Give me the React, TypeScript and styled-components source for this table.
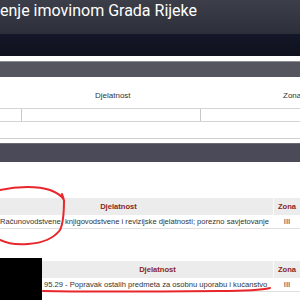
import React, { FC } from 'react';
import styled, { createGlobalStyle } from 'styled-components';

const GlobalStyle = createGlobalStyle`
  html, body {
    margin: 0;
    padding: 0;
    background: #fff;
  }
  body {
    font-family: "Liberation Sans", Arial, sans-serif;
    overflow: hidden;
  }
`;

const Page = styled.div`
  position: relative;
  width: 300px;
  height: 300px;
  overflow: hidden;
  background: #fff;
`;

const TitleBar = styled.header`
  height: 34px;
  background: linear-gradient(#3c3f49, #2c2f3a);
  color: #fff;
  font-family: Roboto, "Liberation Sans", sans-serif;
  font-size: 16px;
  line-height: 22px;
  white-space: nowrap;
  box-sizing: border-box;
`;

const NavBand = styled.nav`
  height: 22px;
  background: linear-gradient(#141728, #0f111d);
  margin-bottom: 5px;
`;

const SectionBar = styled.div<{ $tall?: boolean }>`
  height: ${({ $tall }) => ($tall ? '19px' : '16px')};
  background: ${({ $tall }) => ($tall ? '#4b4a58' : '#55555f')};
  border-top: 1px solid ${({ $tall }) => ($tall ? '#6a6a76' : '#8e8e96')};
  box-sizing: border-box;
`;

const FilterForm = styled.div`
  height: 62px;
  border-bottom: 1px solid #cfcfcf;
  box-sizing: border-box;
  margin-bottom: 4px;
  padding-top: 15px;
`;

const FilterHead = styled.div`
  display: grid;
  grid-template-columns: 201px 1fr;
  font-size: 8px;
  color: #333;
  height: 16px;
  line-height: 8px;
`;

const HeadLabel = styled.span<{ $left?: number }>`
  padding-left: ${({ $left }) => $left ?? 0}px;
`;

const InputRow = styled.div`
  display: grid;
  grid-template-columns: 22px 179px 1fr;
  height: 12px;
  border-top: 1px solid #d4d4d4;
  border-bottom: 1px solid #d4d4d4;
`;

const InputCell = styled.div`
  border-right: 1px solid #c8c8c8;
  &:last-child {
    border-right: none;
  }
`;

const Table = styled.div`
  display: grid;
  grid-template-columns: 1fr 26px;
  font-size: 7.6px;
  color: #333;
`;

const HeadCell = styled.div<{ $shift?: number }>`
  background: #ececec;
  color: #8a1f24;
  font-weight: bold;
  height: 17px;
  line-height: 17px;
  text-align: center;
  padding-right: ${({ $shift }) => $shift ?? 0}px;
  border-right: 1px solid #fafafa;
  &:nth-child(2) {
    border-right: none;
  }
`;

const BodyCell = styled.div<{ $center?: boolean; $pad?: number }>`
  height: 13px;
  line-height: 13px;
  color: #333;
  white-space: nowrap;
  border-bottom: 1px solid #e0e0e0;
  text-align: ${({ $center }) => ($center ? 'center' : 'left')};
  padding-left: ${({ $pad }) => $pad ?? 0}px;
`;

const FirstTable = styled.section`
  margin-top: 36px;
`;

const SecondBlock = styled.section`
  margin-top: 29px;
  display: flex;
`;

const Redacted = styled.div`
  width: 42px;
  height: 43px;
  background: #000;
  flex: none;
`;

const SecondTable = styled.div`
  flex: 1;
  padding-top: 3px;
`;

const Scribble = styled.svg`
  position: absolute;
  left: 0;
  top: 0;
  pointer-events: none;
`;

const Annotations: FC = () => (
  <Scribble width="300" height="300" viewBox="0 0 300 300">
    <path
      d="M0 190 C18 186 38 186 50 190 C58 193 62 196 64 200 L62 194 M64 200 C64 210 64 222 60 230 C54 238 42 243 28 244 C16 245 6 243 0 240"
      fill="none"
      stroke="#e8262b"
      strokeWidth="2"
      strokeLinecap="round"
    />
    <path
      d="M43 291 C90 292 160 291.5 220 291 C245 291 262 290 270 288"
      fill="none"
      stroke="#e8262b"
      strokeWidth="2"
      strokeLinecap="round"
    />
  </Scribble>
);

const App: FC = () => (
  <Page>
    <GlobalStyle />
    <TitleBar>enje imovinom Grada Rijeke</TitleBar>
    <NavBand />
    <SectionBar />
    <FilterForm>
      <FilterHead>
        <HeadLabel $left={95}>Djelatnost</HeadLabel>
        <HeadLabel $left={82}>Zona</HeadLabel>
      </FilterHead>
      <InputRow>
        <InputCell />
        <InputCell />
        <InputCell />
      </InputRow>
    </FilterForm>
    <SectionBar $tall />
    <FirstTable>
      <Table>
        <HeadCell $shift={36}>Djelatnost</HeadCell>
        <HeadCell>Zona</HeadCell>
        <BodyCell>Računovodstvene, knjigovodstvene i revizijske djelatnosti; porezno savjetovanje</BodyCell>
        <BodyCell $center>III</BodyCell>
      </Table>
    </FirstTable>
    <SecondBlock>
      <Redacted />
      <SecondTable>
        <Table>
          <HeadCell>Djelatnost</HeadCell>
          <HeadCell>Zona</HeadCell>
          <BodyCell $pad={2}>95.29 - Popravak ostalih predmeta za osobnu uporabu i kućanstvo</BodyCell>
          <BodyCell $center>III</BodyCell>
        </Table>
      </SecondTable>
    </SecondBlock>
    <Annotations />
  </Page>
);

export default App;
